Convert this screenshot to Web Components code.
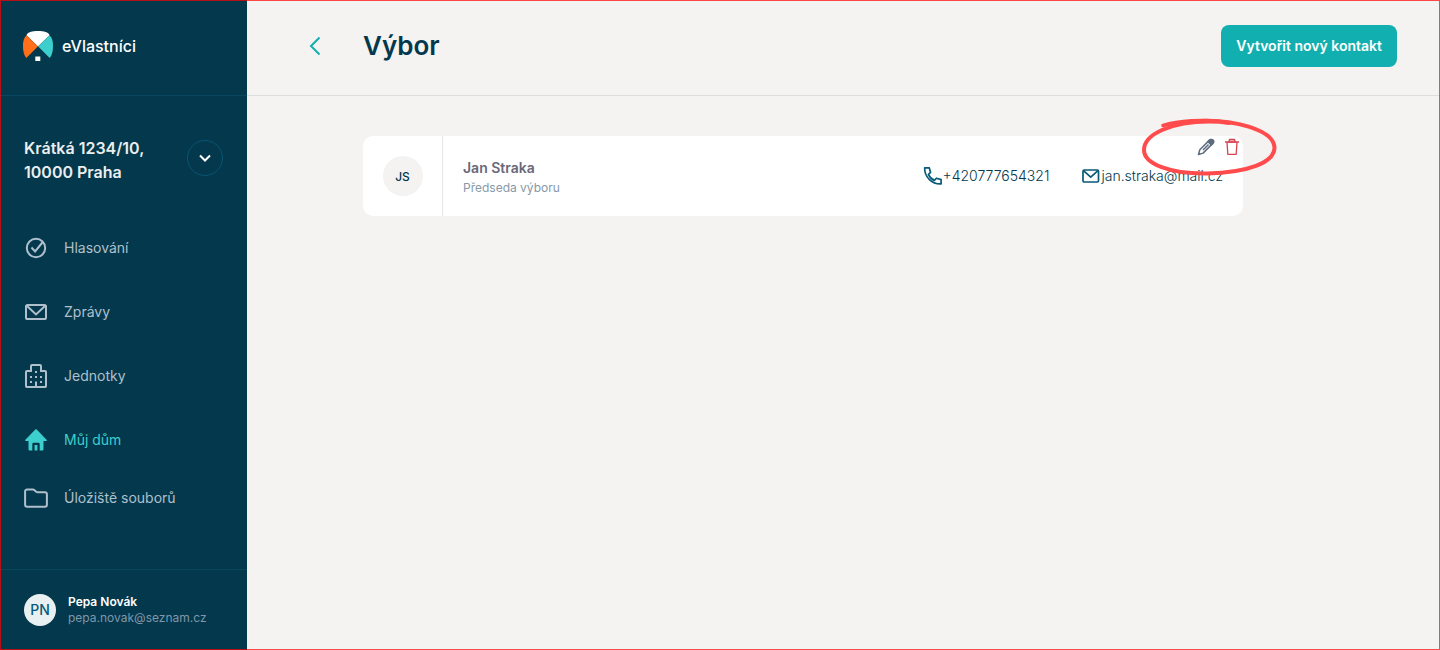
<!DOCTYPE html>
<html lang="cs">
<head>
<meta charset="utf-8">
<meta name="viewport" content="width=device-width, initial-scale=1">
<title>Výbor – eVlastníci</title>
<style>
  body { margin: 0; font-family: Inter, "Liberation Sans", sans-serif; background: #f4f3f2; color: #04384c; }
</style>
</head>
<body>
<ev-app>
  <ev-sidebar slot="sidebar">
    <ev-nav-item icon="check">Hlasování</ev-nav-item>
    <ev-nav-item icon="mail">Zprávy</ev-nav-item>
    <ev-nav-item icon="building">Jednotky</ev-nav-item>
    <ev-nav-item icon="home" active>Můj dům</ev-nav-item>
    <ev-nav-item icon="folder" compact>Úložiště souborů</ev-nav-item>
    <ev-user slot="user" initials="PN">
      <span slot="name">Pepa Novák</span>
      <span slot="email">pepa.novak@seznam.cz</span>
    </ev-user>
  </ev-sidebar>
  <ev-page-header slot="header">
    Výbor
    <span slot="action">Vytvořit nový kontakt</span>
  </ev-page-header>
  <ev-contact initials="JS" phone="+420777654321" email="jan.straka@mail.cz">
    <span slot="name">Jan Straka</span>
    <span slot="role">Předseda výboru</span>
  </ev-contact>
</ev-app>

<script>
const ICONS = {
  check: '<circle cx="12" cy="12" r="9.2"/><path d="M7.500 11.500l3.600 4L18.800 6"/>',
  mail: '<rect x="2" y="4.9" width="20" height="14.2" rx="1.6"/><path d="M2.8 5.8L12 14.4l9.2-8.6"/>',
  building: '<path d="M2 22.1V7.900c0-.6.4-1 1-1h4V2c0-.6.4-1 1-1h8c.6 0 1 .4 1 1v4.900h4c.6 0 1 .4 1 1v14.200c0 .6-.4 1-1 1H3c-.6 0-1-.4-1-1zM12 17.500V22"/><path stroke-dasharray="2 3" d="M6 13h13M6 18h4M16 18h2M11 8h2"/>',
  home: '<path fill="currentColor" stroke="none" d="M11.300 1.600a1 1 0 0 1 1.400 0L22.600 11.700c.5.5.2 1.300-.5 1.300H19.500v8.500a1 1 0 0 1-1 1H15.700V16a1.200 1.200 0 0 0-1.200-1.200h-5A1.200 1.200 0 0 0 8.300 16v6.500H5.500a1 1 0 0 1-1-1V13H1.900c-.7 0-1-.8-.5-1.300zM10.600 17h2.800v5.500h-2.800z"/>',
  folder: '<path d="M1.100 18.700V5.400a2 2 0 0 1 2-2h5.800c.5 0 .9.200 1.300.5l2 1.900c.4.300.8.500 1.300.5h7.400a2 2 0 0 1 2 2v10.400a2 2 0 0 1-2 2H3.100a2 2 0 0 1-2-2z"/>'
};

function define(name, render) {
  customElements.define(name, class extends HTMLElement {
    connectedCallback() {
      if (this.shadowRoot) return;
      const template = document.createElement('template');
      template.innerHTML = render(this);
      this.attachShadow({ mode: 'open' }).append(template.content.cloneNode(true));
    }
  });
}

define('ev-app', () => `
  <style>
    :host { display: grid; grid-template-columns: 247px 1fr; min-height: 100vh; }
    :host::after { content: ""; position: fixed; inset: 0; border: 1px solid rgba(255, 0, 0, .7); pointer-events: none; }
    .list { padding: 40px 116px; }
  </style>
  <slot name="sidebar"></slot>
  <main><slot name="header"></slot><div class="list"><slot></slot></div></main>`);

define('ev-sidebar', () => `
  <style>
    :host { display: flex; flex-direction: column; background: #04384c; color: #fff; }
    .brand { display: flex; align-items: center; gap: 8px; height: 96px; padding: 0 22px 3px; box-sizing: border-box; border-bottom: 1px solid #07475f; color: inherit; text-decoration: none; font-size: 16px; font-weight: 500; }
    .brand svg { width: 32px; height: 32px; }
    .building { display: flex; justify-content: space-between; padding: 40px 24px 32px; }
    address { font-style: normal; font-size: 16px; line-height: 24px; font-weight: 600; color: #ebeeef; }
    button { display: grid; place-items: center; width: 36px; height: 36px; margin: 4px 0 0; padding: 0; border: 1px solid #085475; border-radius: 50%; background: none; color: #fff; }
    nav { flex: 1; }
  </style>
  <a class="brand" href="#">
    <svg viewBox="0 0 32 32" aria-hidden="true">
      <path fill="#fff" d="M4.500 5.200C5.500 2 10 1 16 1s10.500 1 11.500 4.200L16 16.500z"/>
      <path fill="#ff6f1a" d="M4.500 5.200L15.800 16.500 4.300 28C1.700 25 1 20.500 1 15.500c0-4.500 1-8 3.500-10.300z"/>
      <path fill="#3dcfcd" d="M27.500 5.200L16.200 16.500 27.700 28c2.600-3 3.300-7.500 3.300-12.500 0-4.500-1-8-3.500-10.300z"/>
      <path fill="#fff" d="M13.300 26.500h5V31h-5z"/>
    </svg>
    <span>eVlastníci</span>
  </a>
  <div class="building">
    <address>Krátká 1234/10,<br>10000 Praha</address>
    <button aria-label="Změnit dům"><svg width="12" height="8" viewBox="0 0 12 8" fill="none" stroke="currentColor" stroke-width="2"><path d="M1 1.500l5 5 5-5"/></svg></button>
  </div>
  <nav><slot></slot></nav>
  <slot name="user"></slot>`);

define('ev-nav-item', el => `
  <style>
    :host { display: block; color: #afc0cc; }
    :host([active]) { color: #3dcfcd; }
    a { display: flex; align-items: center; gap: 16px; height: 64px; padding: 0 24px; color: inherit; text-decoration: none; font-size: 14px; line-height: 20px; }
    :host([compact]) a { height: 52px; }
  </style>
  <a href="#"><svg width="24" height="24" viewBox="0 0 24 24" fill="none" stroke="currentColor" stroke-width="2" aria-hidden="true">${ICONS[el.getAttribute('icon')]}</svg><slot></slot></a>`);

define('ev-user', el => `
  <style>
    :host { display: flex; align-items: center; gap: 12px; height: 80px; padding: 0 24px; border-top: 1px solid #07475a; font-size: 12px; line-height: 16px; }
    .avatar { display: grid; place-items: center; width: 32px; height: 32px; border-radius: 50%; background: #e8f0f2; color: #085a78; font-size: 14px; font-weight: 500; }
    .name { font-weight: 600; }
    .email { color: #7f97ab; }
  </style>
  <div class="avatar">${el.getAttribute('initials')}</div>
  <div><div class="name"><slot name="name"></slot></div><div class="email"><slot name="email"></slot></div></div>`);

define('ev-page-header', () => `
  <style>
    :host { display: flex; align-items: center; box-sizing: border-box; height: 96px; padding: 0 43px 3px 56px; border-bottom: 1px solid #dcdddd; }
    a { display: grid; place-items: center; width: 24px; height: 24px; color: #12afb0; }
    h1 { flex: 1; margin: 0 0 0 36px; font-size: 26px; line-height: 32px; font-weight: 600; }
    button { height: 42px; padding: 0 15px; border: 0; border-radius: 8px; background: #12afb0; color: #fff; font: 600 14px/20px Inter, "Liberation Sans", sans-serif; }
  </style>
  <a href="#" aria-label="Zpět"><svg width="12" height="20" viewBox="0 0 12 20" fill="none" stroke="currentColor" stroke-width="2"><path d="M10.500 1.500L2 10l8.500 8.500"/></svg></a>
  <h1><slot></slot></h1>
  <button><slot name="action"></slot></button>`);

define('ev-contact', el => `
  <style>
    :host { display: flex; position: relative; max-width: 880px; height: 80px; border-radius: 10px; background: #fff; }
    .side { display: grid; place-items: center; width: 79px; border-right: 1px solid #e6e6e6; }
    .avatar { display: grid; place-items: center; width: 40px; height: 40px; border-radius: 50%; background: #f4f3f2; font-size: 12px; font-weight: 500; }
    .who { flex: 1; align-self: center; padding: 4px 20px 0; }
    .name { font-size: 14px; line-height: 20px; font-weight: 600; color: #68687a; }
    .role { font-size: 12px; line-height: 20px; color: #8799a8; }
    .links { display: flex; align-items: center; gap: 32px; padding-right: 20px; }
    .links a { display: flex; align-items: center; color: #04384c; text-decoration: none; font-size: 14px; line-height: 20px; font-weight: 300; }
    .links svg { color: #085a78; }
    .tools { position: absolute; top: 0; right: 0; display: flex; gap: 4px; }
    .tools button { display: grid; place-items: center; width: 22px; height: 22px; padding: 0; border: 0; background: none; color: #5f6c80; }
    .tools .delete { color: #d64550; }
    .mark { position: absolute; top: -20px; right: -36px; pointer-events: none; }
  </style>
  <div class="side"><div class="avatar">${el.getAttribute('initials')}</div></div>
  <div class="who"><div class="name"><slot name="name"></slot></div><div class="role"><slot name="role"></slot></div></div>
  <div class="links">
    <a href="tel:${el.getAttribute('phone')}"><svg width="20" height="20" viewBox="0 0 20 20" fill="none" stroke="currentColor" stroke-width="1.700" stroke-linejoin="round"><path d="M1.700 1.900h4.600l1.300 4.500-2.200 1.900c1.200 2.700 3.200 4.900 6 6.100l2-2.200 4.700 1.400v4.300C9.300 18.500 1.200 11 1.700 1.900z"/></svg>${el.getAttribute('phone')}</a>
    <a href="mailto:${el.getAttribute('email')}"><svg width="20" height="20" viewBox="0 0 20 20" fill="none" stroke="currentColor" stroke-width="1.700"><rect x="2" y="4" width="15.500" height="12" rx="1.200"/><path d="M2.500 4.700l7.200 6.400 7.300-6.400"/></svg>${el.getAttribute('email')}</a>
  </div>
  <div class="tools">
    <button aria-label="Upravit"><svg width="18" height="18" viewBox="0 0 18 18" fill="none" stroke="currentColor" stroke-width="1.500" stroke-linejoin="round"><path d="M1.500 16.500l1.300-4.700L12.500 2.100a2.300 2.300 0 0 1 3.300 3.300L6.100 15.100zM11.500 6.500l-5.500 5.500"/><path fill="currentColor" d="M11 3.600l1.500-1.500a2.300 2.300 0 0 1 3.300 3.300L14.300 6.900z"/></svg></button>
    <button class="delete" aria-label="Smazat"><svg width="16" height="18" viewBox="0 0 16 18" fill="none" stroke="currentColor" stroke-width="1.300" stroke-linejoin="round"><path d="M1 4h14M3 4l.8 12.300h8.400L13 4"/><path fill="#eaa3a8" d="M4.800 4l.8-2.700h4.800l.8 2.700z"/></svg></button>
  </div>
  <svg class="mark" width="140" height="64" viewBox="0 0 140 64" fill="none" stroke="#ff4b4b" stroke-linecap="round" stroke-linejoin="round" aria-hidden="true">
    <path stroke-width="3.600" d="M24 9.500C40 4.500 65 3.500 82 5.500"/>
    <path stroke-width="4" d="M55 5.200C95 2.500 134 14 135.500 31C136 47 108 56.500 68 57.500C31 58 5 48 5 34C5 18 33 5.500 70 5.500C78 5.500 84 6 90 7"/>
  </svg>`);
</script>
</body>
</html>
